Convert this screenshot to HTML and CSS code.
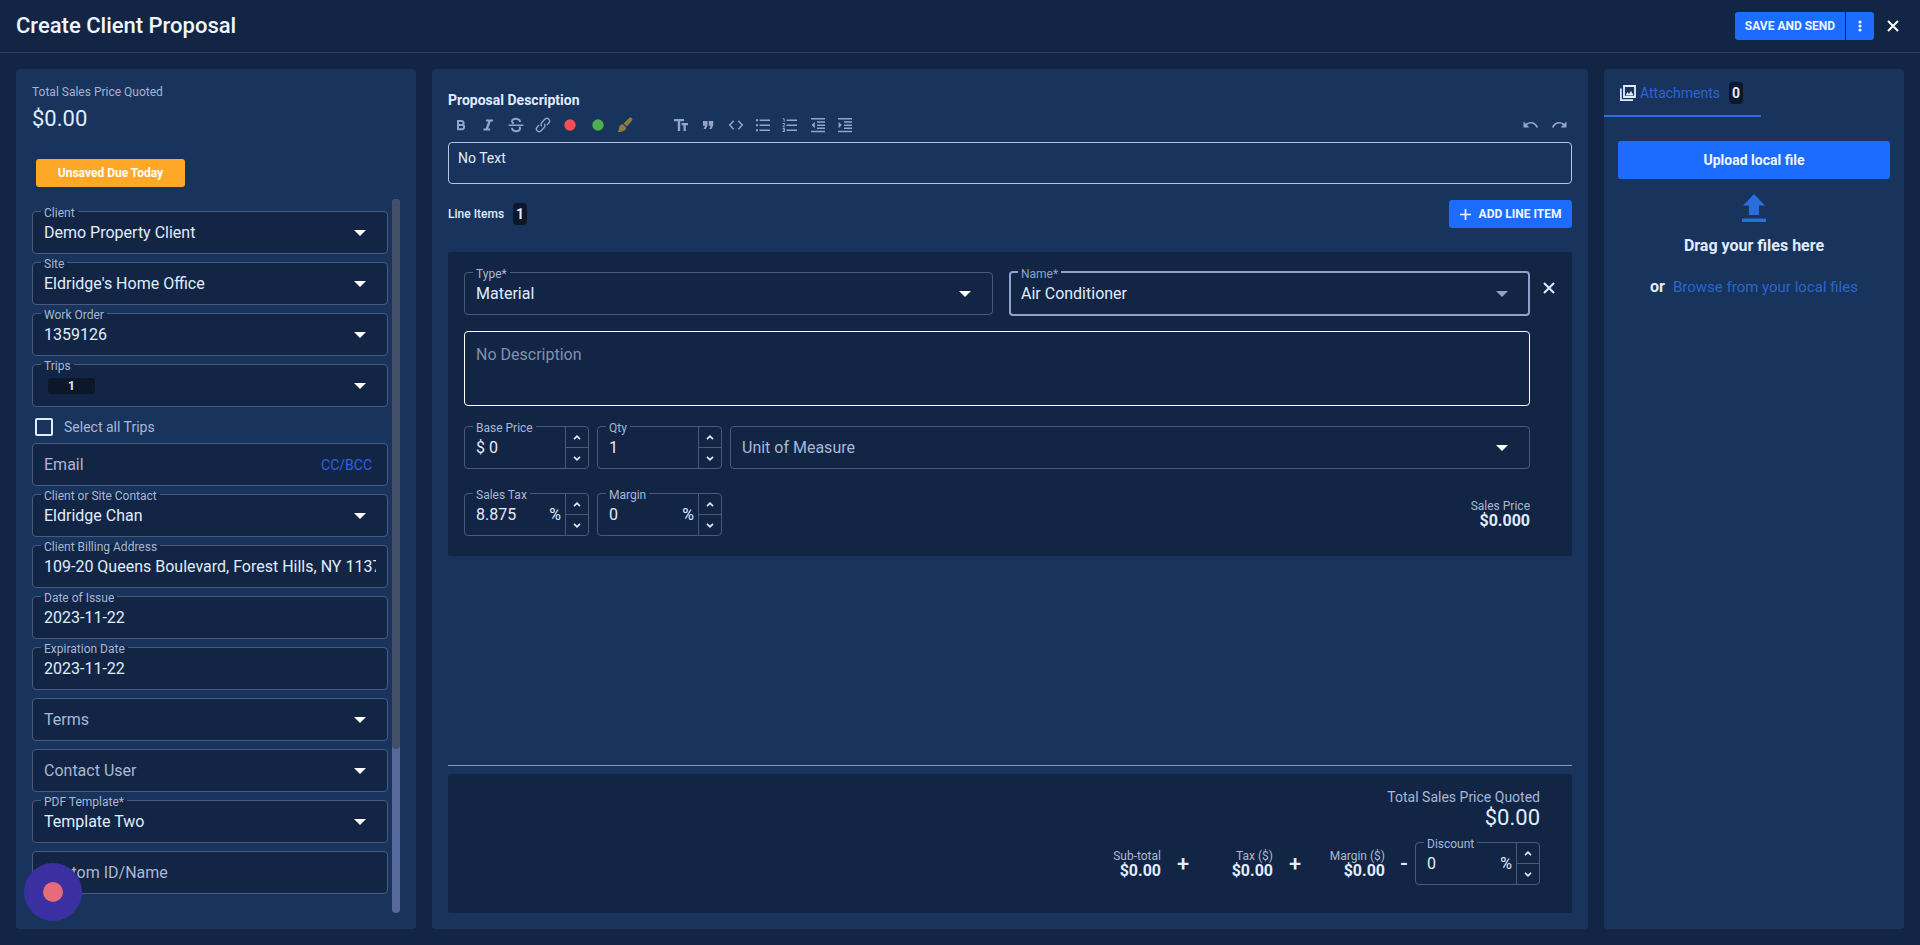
FILE: index.html
```
<!DOCTYPE html>
<html lang="en">
<head>
    <meta charset="UTF-8">
    <title>Create Client Proposal</title>
    <link rel="stylesheet" href="styles.css">
</head>
<body>
    <!-- shared icons -->
    <svg class="sprite" aria-hidden="true">
        <symbol id="arrow" viewBox="0 0 12 6"><path d="M0 0h12L6 6z"/></symbol>
        <symbol id="up" viewBox="0 0 8 5"><path d="M1 4.2L4 1.2l3 3" fill="none" stroke="currentColor" stroke-width="1.7"/></symbol>
        <symbol id="down" viewBox="0 0 8 5"><path d="M1 .8l3 3 3-3" fill="none" stroke="currentColor" stroke-width="1.7"/></symbol>
        <symbol id="close" viewBox="0 0 12 12"><path d="M1 1l10 10M11 1L1 11" fill="none" stroke="currentColor" stroke-width="2"/></symbol>
    </svg>

    <header class="header">
        <h1>Create Client Proposal</h1>
        <div class="header-actions">
            <button class="btn save-button">SAVE AND SEND</button>
            <button class="btn more-button" aria-label="More">
                <svg width="4" height="12" viewBox="0 0 4 12"><circle cx="2" cy="2" r="1.6"/><circle cx="2" cy="6" r="1.6"/><circle cx="2" cy="10" r="1.6"/></svg>
            </button>
            <button class="close-button" aria-label="Close"><svg width="12" height="12"><use href="#close"/></svg></button>
        </div>
    </header>

    <main class="main">
        <aside class="panel details">
            <div class="quoted-label">Total Sales Price Quoted</div>
            <div class="quoted-value">$0.00</div>
            <div class="status-badge">Unsaved Due Today</div>

            <div class="scroll-area">
                <form class="field-list">
                    <div class="field">
                        <label for="client">Client</label>
                        <select id="client"><option>Demo Property Client</option></select>
                        <svg class="arrow"><use href="#arrow"/></svg>
                    </div>
                    <div class="field">
                        <label for="site">Site</label>
                        <select id="site"><option>Eldridge's Home Office</option></select>
                        <svg class="arrow"><use href="#arrow"/></svg>
                    </div>
                    <div class="field">
                        <label for="workOrder">Work Order</label>
                        <select id="workOrder"><option>1359126</option></select>
                        <svg class="arrow"><use href="#arrow"/></svg>
                    </div>
                    <div class="field">
                        <label for="trips">Trips</label>
                        <select id="trips" class="chip-select"><option>1</option></select>
                        <svg class="arrow"><use href="#arrow"/></svg>
                    </div>
                    <div class="check-row">
                        <input type="checkbox" id="allTrips">
                        <label for="allTrips">Select all Trips</label>
                    </div>
                    <div class="field">
                        <input type="email" placeholder="Email" aria-label="Email">
                        <a href="#" class="cc-link">CC/BCC</a>
                    </div>
                    <div class="field">
                        <label for="contact">Client or Site Contact</label>
                        <select id="contact"><option>Eldridge Chan</option></select>
                        <svg class="arrow"><use href="#arrow"/></svg>
                    </div>
                    <div class="field">
                        <label for="address">Client Billing Address</label>
                        <input type="text" id="address" value="109-20 Queens Boulevard, Forest Hills, NY 11375">
                    </div>
                    <div class="field">
                        <label for="issueDate">Date of Issue</label>
                        <input type="text" id="issueDate" value="2023-11-22">
                    </div>
                    <div class="field">
                        <label for="expirationDate">Expiration Date</label>
                        <input type="text" id="expirationDate" value="2023-11-22">
                    </div>
                    <div class="field">
                        <select class="empty" aria-label="Terms"><option>Terms</option></select>
                        <svg class="arrow"><use href="#arrow"/></svg>
                    </div>
                    <div class="field">
                        <select class="empty" aria-label="Contact User"><option>Contact User</option></select>
                        <svg class="arrow"><use href="#arrow"/></svg>
                    </div>
                    <div class="field">
                        <label for="template">PDF Template*</label>
                        <select id="template"><option>Template Two</option></select>
                        <svg class="arrow"><use href="#arrow"/></svg>
                    </div>
                    <div class="field">
                        <input type="text" placeholder="Custom ID/Name" aria-label="Custom ID/Name">
                    </div>
                </form>
                <div class="scroll-track"><div class="scroll-thumb"></div></div>
            </div>
        </aside>

        <section class="panel proposal">
            <h2><label for="description">Proposal Description</label></h2>
            <div class="toolbar">
                <div class="tool-group">
                    <button aria-label="Bold"><svg viewBox="0 0 16 16"><path d="M5 4h3.800a2 2 0 0 1 .7 3.800A2.300 2.300 0 0 1 9 12.300H5zM5 8h4" fill="none" stroke="currentColor" stroke-width="2"/></svg></button>
                    <button aria-label="Italic"><svg viewBox="0 0 16 16"><path d="M6 2.500h7v2.100h-2.300L8.200 11.400h2v2.100H3.500v-2.100h2.200l2.500-6.800H6z"/></svg></button>
                    <button aria-label="Strikethrough"><svg viewBox="0 0 16 16"><path d="M.5 7.500h15v1.500H.5z"/><path d="M12 5c0-4-8-4.300-8-.7 0 1 .7 1.800 1.800 2.400M4 10.800c0 4.500 8 4.500 8 .7 0-.8-.2-1.300-.7-1.800" fill="none" stroke="currentColor" stroke-width="2"/></svg></button>
                    <button aria-label="Link"><svg viewBox="0 0 16 16"><path d="M6.800 9.200C5.700 8.100 5.700 6.500 6.800 5.400l3.100-3.100c2.700-2.600 6.400 1.100 3.800 3.800l-1.800 1.800M9.200 6.800c1.100 1.100 1.100 2.700 0 3.800l-3.100 3.100c-2.700 2.600-6.400-1.100-3.800-3.800l1.800-1.800" fill="none" stroke="currentColor" stroke-width="1.400"/></svg></button>
                    <button aria-label="Red text"><svg viewBox="0 0 16 16"><circle cx="8" cy="8" r="5.700" fill="#f44f55"/></svg></button>
                    <button aria-label="Green text"><svg viewBox="0 0 16 16"><circle cx="8" cy="8" r="5.700" fill="#4caf50"/></svg></button>
                    <button aria-label="Highlight"><svg viewBox="0 0 16 16"><path fill="#8c7c42" d="M12.300.7c1.800-.8 3.700.8 2.900 2.800L9.800 9.600 6.600 6.500zM5.900 7.200l3.200 3.200c.3 2.500-3 5-8.900 4.700 2.300-1.500 1.400-3.800 2.500-6 .7-1.200 2-1.900 3.200-1.900z"/></svg></button>
                </div>
                <div class="tool-group">
                    <button aria-label="Text size"><svg viewBox="0 0 16 16"><path d="M1 2h10v2.300H7.200V14H4.800V4.300H1zM8.500 6H15v2.200h-2.200V14h-2.300V8.200h-2z"/></svg></button>
                    <button aria-label="Quote"><svg viewBox="0 0 16 16"><path d="M3 4h4.500v4.500L5.800 12H3.600L5 8.800H3zM8.700 4h4.500v4.500L11.500 12H9.300l1.400-3.200h-2z"/></svg></button>
                    <button aria-label="Code"><svg viewBox="0 0 16 16"><path d="M5.700 3.800L1.700 8l4 4.200M10.300 3.800l4 4.200-4 4.200" fill="none" stroke="currentColor" stroke-width="1.500"/></svg></button>
                    <button aria-label="Bulleted list"><svg viewBox="0 0 16 16"><path d="M4.500 2.500H15V4H4.500zM4.500 7.500H15V9H4.500zM4.500 12.500H15V14H4.500zM1 2.300h2v2H1zM1 7.200h2v2H1zM1 12.200h2v2H1z"/></svg></button>
                    <button aria-label="Numbered list"><svg viewBox="0 0 16 16"><path d="M4.500 2.500H15V4H4.500zM4.500 7.500H15V9H4.500zM4.500 12.500H15V14H4.500z"/><path d="M.8 1.800h1.400v3M.5 6.500h2v1.300l-1.700 2h2M.5 11.500h2v3h-2M1 13h1.500" fill="none" stroke="currentColor"/></svg></button>
                    <button aria-label="Outdent"><svg viewBox="0 0 16 16"><path d="M1 1h14v1.500H1zM7 4.300h8v1.500H7zM7 7.500h8V9H7zM7 10.500h8V12H7zM1 13.700h14v1.500H1zM4.800 5v6.200L1.600 8.100z"/></svg></button>
                    <button aria-label="Indent"><svg viewBox="0 0 16 16"><path d="M1 1h14v1.500H1zM7 4.300h8v1.500H7zM7 7.500h8V9H7zM7 10.500h8V12H7zM1 13.700h14v1.500H1zM1.600 5v6.200l3.200-3.100z"/></svg></button>
                </div>
                <div class="history-group">
                    <button aria-label="Undo"><svg viewBox="0 0 16 16"><path d="M.5 4.500l2.300 2.300C6.500 3.800 12.800 4 15.200 10.200l-1.700.6C11.700 6.500 7.300 5.300 4 8l2.300 2.500H.5z"/></svg></button>
                    <button aria-label="Redo"><svg viewBox="0 0 16 16"><path d="M15.500 4.500l-2.300 2.300C9.500 3.800 3.200 4 .8 10.200l1.700.6C4.300 6.500 8.700 5.300 12 8l-2.300 2.500h5.800z"/></svg></button>
                </div>
            </div>
            <textarea id="description" class="editor">No Text</textarea>

            <div class="line-header">
                <span>Line Items</span>
                <span class="count">1</span>
                <button class="btn add-button">
                    <svg width="11" height="11" viewBox="0 0 11 11"><path d="M5.500 0v11M0 5.500h11" stroke="currentColor" stroke-width="1.700"/></svg>
                    ADD LINE ITEM
                </button>
            </div>

            <div class="line-item">
                <div class="line-fields">
                    <div class="type-row">
                        <div class="field">
                            <label for="type">Type*</label>
                            <select id="type"><option>Material</option></select>
                            <svg class="arrow"><use href="#arrow"/></svg>
                        </div>
                        <div class="field focused">
                            <label for="name">Name*</label>
                            <select id="name"><option>Air Conditioner</option></select>
                            <svg class="arrow"><use href="#arrow"/></svg>
                        </div>
                    </div>
                    <textarea class="item-description" placeholder="No Description" aria-label="Description"></textarea>
                    <div class="price-row">
                        <div class="field number">
                            <label for="basePrice">Base Price</label>
                            <span class="prefix">$</span>
                            <input type="text" id="basePrice" value="0">
                            <div class="stepper">
                                <button aria-label="Increase"><svg><use href="#up"/></svg></button>
                                <button aria-label="Decrease"><svg><use href="#down"/></svg></button>
                            </div>
                        </div>
                        <div class="field number">
                            <label for="qty">Qty</label>
                            <input type="text" id="qty" value="1">
                            <div class="stepper">
                                <button aria-label="Increase"><svg><use href="#up"/></svg></button>
                                <button aria-label="Decrease"><svg><use href="#down"/></svg></button>
                            </div>
                        </div>
                        <div class="field unit">
                            <select class="empty" aria-label="Unit of Measure"><option>Unit of Measure</option></select>
                            <svg class="arrow"><use href="#arrow"/></svg>
                        </div>
                    </div>
                    <div class="price-row">
                        <div class="field number">
                            <label for="salesTax">Sales Tax</label>
                            <input type="text" id="salesTax" value="8.875">
                            <span class="suffix">%</span>
                            <div class="stepper">
                                <button aria-label="Increase"><svg><use href="#up"/></svg></button>
                                <button aria-label="Decrease"><svg><use href="#down"/></svg></button>
                            </div>
                        </div>
                        <div class="field number">
                            <label for="margin">Margin</label>
                            <input type="text" id="margin" value="0">
                            <span class="suffix">%</span>
                            <div class="stepper">
                                <button aria-label="Increase"><svg><use href="#up"/></svg></button>
                                <button aria-label="Decrease"><svg><use href="#down"/></svg></button>
                            </div>
                        </div>
                        <div class="amount sales-price">
                            <span>Sales Price</span>
                            <strong>$0.000</strong>
                        </div>
                    </div>
                </div>
                <button class="remove-button" aria-label="Remove"><svg width="12" height="12"><use href="#close"/></svg></button>
            </div>

            <div class="totals-wrap">
                <div class="totals">
                    <div class="total-label">Total Sales Price Quoted</div>
                    <div class="total-value">$0.00</div>
                    <div class="sums">
                        <div class="amount"><span>Sub-total</span><strong>$0.00</strong></div>
                        <span class="operator">+</span>
                        <div class="amount"><span>Tax ($)</span><strong>$0.00</strong></div>
                        <span class="operator">+</span>
                        <div class="amount"><span>Margin ($)</span><strong>$0.00</strong></div>
                        <span class="operator minus">-</span>
                        <div class="field number">
                            <label for="discount">Discount</label>
                            <input type="text" id="discount" value="0">
                            <span class="suffix">%</span>
                            <div class="stepper">
                                <button aria-label="Increase"><svg><use href="#up"/></svg></button>
                                <button aria-label="Decrease"><svg><use href="#down"/></svg></button>
                            </div>
                        </div>
                    </div>
                </div>
            </div>
        </section>

        <aside class="panel attachments">
            <button class="tab">
                <svg width="16" height="16" viewBox="0 0 16 16"><path d="M4 1h11v11H4z" fill="none" stroke="currentColor" stroke-width="1.800"/><path d="M.9 3.500v11.600H13" fill="none" stroke="currentColor" stroke-width="1.700"/><path d="M5.500 10.500L7.500 7l1.500 2 2-3 2.700 4.500z"/></svg>
                <span class="tab-text">Attachments</span>
                <span class="count">0</span>
            </button>
            <div class="drop-zone">
                <button class="btn upload-button">Upload local file</button>
                <svg class="upload-icon" width="24" height="28" viewBox="0 0 24 28"><path d="M12 0l11 11.500h-6V21H7v-9.500H1zM0 24.500h24V28H0z"/></svg>
                <div class="drag-text">Drag your files here</div>
                <div class="browse">or <a href="#">Browse from your local files</a></div>
            </div>
        </aside>
    </main>

    <button class="record-button" aria-label="Record"><span></span></button>
</body>
</html>
```
FILE: styles.css
```
* {
    box-sizing: border-box;
}

body {
    font-family: Roboto, Arial, sans-serif;
    font-size: 14px;
    background-color: #122544;
    color: #e0ecff;
    margin: 0;
    min-height: 100vh;
    display: flex;
    flex-direction: column;
}

button, input, select, textarea {
    font: inherit;
    color: inherit;
    background: transparent;
    border: none;
    margin: 0;
    padding: 0;
    outline: none;
}

button, select {
    cursor: pointer;
}

svg {
    display: block;
    fill: currentColor;
}

a {
    color: #2b66cf;
    text-decoration: none;
}

.sprite {
    display: none;
}

.header {
    height: 53px;
    padding: 0 21px 1px 16px;
    border-bottom: 1px solid #263d64;
    display: flex;
    justify-content: space-between;
    align-items: center;
}

.header h1 {
    margin: 0;
    font-size: 22px;
    line-height: 24px;
    font-weight: 500;
    color: #f0f6ff;
}

.header-actions {
    display: flex;
    align-items: center;
}

.btn {
    display: flex;
    align-items: center;
    justify-content: center;
    height: 28px;
    border-radius: 3px;
    background-color: #1c6dff;
    color: #f0f6ff;
    font-size: 12px;
    font-weight: bold;
}

.save-button {
    width: 110px;
    border-radius: 3px 0 0 3px;
}

.more-button {
    width: 28px;
    margin-left: 1px;
    border-radius: 0 3px 3px 0;
}

.close-button {
    margin-left: 13px;
    color: #fff;
}

.main {
    flex: 1;
    display: flex;
    gap: 16px;
    padding: 16px;
}

.panel {
    background-color: #18335c;
    border-radius: 3px;
}

/* left column */
.details {
    width: 400px;
    padding: 16px;
    display: flex;
    flex-direction: column;
}

.quoted-label {
    font-size: 12px;
    line-height: 14px;
    color: #a5b4d0;
}

.quoted-value {
    font-size: 22px;
    line-height: 26px;
    margin-top: 7px;
}

.status-badge {
    align-self: flex-start;
    width: 149px;
    height: 28px;
    line-height: 28px;
    margin: 27px 4px 12px;
    border-radius: 3px;
    background-color: #ffa726;
    color: #fff;
    font-size: 12px;
    font-weight: bold;
    text-align: center;
}

.scroll-area {
    flex: 1;
    display: flex;
    gap: 4px;
}

.field-list {
    flex: 1;
    min-width: 0;
    padding-top: 12px;
}

.field-list .field {
    margin-bottom: 8px;
}

.scroll-track {
    width: 8px;
    border-radius: 4px;
    background-color: #56699a;
}

.scroll-thumb {
    height: 77%;
    border-radius: 4px;
    background-color: #434f67;
}

/* form fields */
.field {
    position: relative;
    display: flex;
    align-items: center;
    height: 43px;
    padding: 0 11px;
    border: 1px solid #485b7e;
    border-radius: 4px;
    background-color: #122544;
    font-size: 16px;
}

.field label {
    position: absolute;
    left: 8px;
    top: -6px;
    padding: 0 3px;
    font-size: 12px;
    line-height: 14px;
    color: #a9b8d4;
    background: linear-gradient(#122544, #122544) no-repeat 0 5px / 100% 1px;
}

.field input, .field select {
    flex: 1;
    width: 100%;
    min-width: 0;
    height: 100%;
    appearance: none;
}

.field option {
    background-color: #122544;
}

.field .empty, .field input::placeholder {
    color: #a9b8d4;
}

.arrow {
    position: absolute;
    right: 21px;
    top: 18px;
    width: 12px;
    height: 6px;
    color: #fff;
    pointer-events: none;
}

/* chip drawn behind the selected trip count */
.field .chip-select {
    flex: none;
    width: 47px;
    height: 16px;
    margin-left: 4px;
    border-radius: 3px;
    font-size: 12px;
    line-height: 16px;
    font-weight: bold;
    text-align: center;
    text-align-last: center;
    background-color: #0c1829;
}

.cc-link {
    font-size: 14px;
    padding-right: 4px;
    color: #2c62e0;
}

.check-row {
    display: flex;
    align-items: center;
    height: 28px;
    padding: 0 3px 4px;
    color: #a9b8d4;
}

.check-row input {
    appearance: none;
    width: 18px;
    height: 18px;
    margin-right: 11px;
    border: 2px solid #e0ecff;
    border-radius: 2px;
}

.focused {
    height: 45px;
    margin: -1px 0;
    padding: 0 10px;
    border: 2px solid #8ea2cc;
}

.focused label {
    left: 7px;
    color: #8ea2cc;
    background-size: 100% 2px;
    background-position: 0 4px;
}

.focused .arrow {
    right: 20px;
    color: #8ea2cc;
}

.number {
    width: 125px;
    padding-right: 0;
    flex: none;
}

.prefix {
    margin-right: 4px;
}

.suffix {
    padding: 0 4px;
}

.stepper {
    width: 23px;
    height: 100%;
    border-left: 1px solid #485b7e;
    display: flex;
    flex-direction: column;
}

.stepper button {
    flex: 1;
    display: flex;
    align-items: center;
    justify-content: center;
}

.stepper button + button {
    border-top: 1px solid #485b7e;
}

.stepper svg {
    width: 8px;
    height: 5px;
}

/* middle column */
.proposal {
    flex: 1;
    min-width: 0;
    padding: 16px;
    display: flex;
    flex-direction: column;
}

.proposal h2 {
    margin: 6px 0 4px;
    font-size: 14px;
    line-height: 18px;
    font-weight: bold;
}

.toolbar {
    display: flex;
    gap: 32px;
    padding: 0 1px;
    color: #94a5c8;
}

.tool-group {
    width: 188px;
    display: flex;
    justify-content: space-between;
}

.history-group {
    display: flex;
    gap: 4px;
    margin-left: auto;
}

.toolbar button {
    width: 24px;
    height: 24px;
    padding: 4px;
}

.editor {
    flex: none;
    height: 42px;
    margin-top: 5px;
    padding: 7px 9px;
    border: 1px solid #b4c4e2;
    border-radius: 4px;
    line-height: 16px;
    resize: none;
}

.line-header {
    display: flex;
    align-items: center;
    margin: 16px 0 24px;
    font-size: 12px;
    font-weight: 500;
}

.count {
    width: 14px;
    height: 22px;
    line-height: 22px;
    margin-left: 9px;
    border-radius: 4px;
    background-color: #0c1829;
    color: #e0ecff;
    font-size: 14px;
    font-weight: bold;
    text-align: center;
}

.add-button {
    width: 123px;
    gap: 8px;
    margin-left: auto;
}

.line-item {
    display: flex;
    padding: 20px 16px;
    border-radius: 3px;
    background-color: #122544;
}

.line-fields {
    flex: 1;
}

.type-row {
    display: grid;
    grid-template-columns: 1fr calc(50% - 12px);
    gap: 16px;
}

.item-description {
    display: block;
    width: 100%;
    height: 75px;
    margin: 16px 0 20px;
    padding: 14px 11px;
    border: 1px solid #fff;
    border-radius: 4px;
    font-size: 16px;
    line-height: 18px;
    resize: none;
}

.item-description::placeholder {
    color: #8391ab;
}

.price-row {
    display: flex;
    gap: 8px;
}

.price-row + .price-row {
    margin-top: 24px;
}

.unit {
    flex: 1;
}

.amount {
    display: flex;
    flex-direction: column;
    align-items: flex-end;
    font-size: 12px;
    line-height: 14px;
    color: #a9b8d4;
}

.amount strong {
    font-size: 16px;
    line-height: 16px;
    color: #e0ecff;
}

.sales-price {
    margin-left: auto;
    padding-top: 6px;
}

.remove-button {
    align-self: flex-start;
    width: 26px;
    height: 32px;
    padding-left: 13px;
}

.totals-wrap {
    margin-top: auto;
    padding-top: 8px;
    border-top: 1px solid #7d96c6;
}

.totals {
    display: flex;
    flex-direction: column;
    align-items: flex-end;
    padding: 14px 32px 28px;
    border-radius: 3px;
    background-color: #122544;
}

.total-label {
    line-height: 18px;
    color: #a9b8d4;
}

.total-value {
    font-size: 22px;
    line-height: 24px;
}

.sums {
    display: flex;
    align-items: center;
    margin-top: 12px;
}

.sums .amount {
    width: 68px;
}

.operator {
    width: 44px;
    font-size: 22px;
    font-weight: 500;
    text-align: center;
}

.minus {
    width: 30px;
    padding-left: 8px;
}

/* right column */
.attachments {
    width: 300px;
}

.tab {
    display: flex;
    align-items: center;
    width: 157px;
    height: 48px;
    padding: 2px 0 0 16px;
    border-bottom: 2px solid #2b6ddd;
}

.tab-text {
    margin-left: 4px;
    color: #2b66cf;
}

.drop-zone {
    display: flex;
    flex-direction: column;
    align-items: center;
    padding: 24px 14px;
}

.upload-button {
    width: 100%;
    height: 38px;
    padding-bottom: 1px;
    font-size: 14px;
}

.upload-icon {
    margin-top: 15px;
    color: #2b6ddd;
}

.drag-text {
    margin-top: 14px;
    font-size: 16px;
    line-height: 20px;
    font-weight: bold;
}

.browse {
    margin-top: 20px;
    line-height: 22px;
    font-size: 16px;
    font-weight: bold;
}

.browse a {
    margin-left: 4px;
    font-size: 15px;
    font-weight: 400;
}

.record-button {
    position: fixed;
    left: 24px;
    bottom: 24px;
    width: 58px;
    height: 58px;
    border-radius: 50%;
    background-color: #3a30a1;
}

.record-button span {
    display: block;
    width: 20px;
    height: 20px;
    margin: auto;
    border-radius: 50%;
    background-color: #e56c78;
}
```
